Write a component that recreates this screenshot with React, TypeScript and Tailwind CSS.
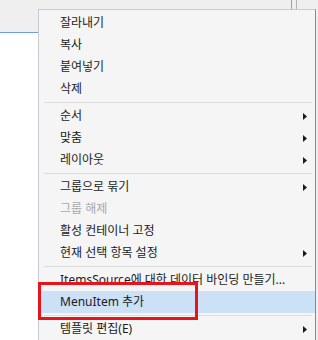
import React from "react";

type Item =
  | { sep: true }
  | { label: string; sub?: boolean; disabled?: boolean; active?: boolean };

const items: Item[] = [
  { label: "잘라내기" },
  { label: "복사" },
  { label: "붙여넣기" },
  { label: "삭제" },
  { sep: true },
  { label: "순서", sub: true },
  { label: "맞춤", sub: true },
  { label: "레이아웃", sub: true },
  { sep: true },
  { label: "그룹으로 묶기", sub: true },
  { label: "그룹 해제", disabled: true },
  { label: "활성 컨테이너 고정" },
  { label: "현재 선택 항목 설정", sub: true },
  { sep: true },
  { label: "ItemsSource에 대한 데이터 바인딩 만들기..." },
  { label: "MenuItem 추가", active: true },
  { sep: true },
  { label: "템플릿 편집(E)", sub: true },
];

function Arrow() {
  return (
    <svg width="4" height="7" viewBox="0 0 4 7" className="shrink-0">
      <polygon points="0,0 4,3.5 0,7" fill="#1a1a1a" />
    </svg>
  );
}

function ContextMenu() {
  return (
    <div className="w-[278px] border-l border-t border-r border-[#c9c9d6] border-r-[#8a8a8a] bg-[#f5f5f5] pt-[2px] flex flex-col">
      {items.map((it, i) =>
        "sep" in it ? (
          <div key={i} className="h-[5px] flex items-center pl-[5px] pr-[3px]">
            <div className="h-px w-full bg-[#dcdcdc]" />
          </div>
        ) : (
          <div
            key={i}
            className={`h-[22px] flex items-center pl-[21px] pr-[8px] ${
              it.active ? "bg-[#cce0f6]" : ""
            } ${it.disabled ? "text-[#a8a8a8]" : "text-[#1b1b1b]"}`}
          >
            <span className="flex-1 whitespace-nowrap">{it.label}</span>
            {it.sub && <Arrow />}
          </div>
        )
      )}
    </div>
  );
}

export default function App() {
  return (
    <div
      className="relative w-[318px] h-[340px] bg-[#efefef] flex flex-col overflow-hidden text-[12px]"
      style={{ fontFamily: '"Noto Sans", "Noto Sans CJK KR", sans-serif' }}
    >
      <div className="h-[9px] flex shrink-0">
        <div className="w-[291px]" />
        <div className="w-px bg-[#7ea2e6]" />
        <div className="w-[4px]" />
        <div className="w-px bg-[#b4b4b4]" />
      </div>
      <div className="flex flex-1">
        <div className="w-[38px] flex flex-col">
          <div className="h-[23px]" />
          <div className="h-px bg-[#6b9cf0]" />
          <div className="flex-1 bg-white" />
        </div>
        <ContextMenu />
        <div className="flex-1" />
      </div>
      <div className="absolute left-[38px] top-[282px] w-[160px] h-[38px] border-[3px] border-[#e8141c]" />
    </div>
  );
}
